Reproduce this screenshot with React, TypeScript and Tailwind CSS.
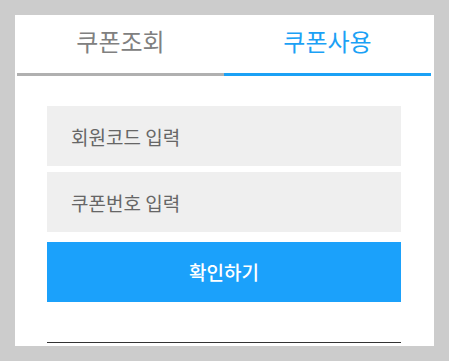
import * as React from "react";

const App = () => {
    const [tab, setTab] = React.useState(1);

    return (
        <div className="w-[449px] h-[361px] bg-[#cccccc] p-[15px]" style={{ fontFamily: '"Noto Sans CJK KR", "Noto Sans", sans-serif' }}>
            <div className="bg-white h-[331px] pl-[2px] pr-[3px]">
                <div className="flex">
                    {["쿠폰조회", "쿠폰사용"].map((label, i) => (
                        <button
                            key={label}
                            onClick={() => setTab(i)}
                            className={`flex-1 h-[61px] pb-[6px] flex items-center justify-center text-[24px] border-b-[3px] ${
                                tab === i ? "text-[#1ba1f5] border-[#1ba1f5]" : "text-[#808080] border-[#b0b0b0]"
                            }`}
                        >
                            {label}
                        </button>
                    ))}
                </div>

                <div className="px-[30px] pt-[30px]">
                    <input
                        className="block w-full h-[60px] bg-[#efefef] pl-[24px] text-[19px] text-[#666] placeholder:text-[#666] outline-none"
                        placeholder="회원코드 입력"
                    />
                    <input
                        className="block w-full h-[60px] mt-[6px] bg-[#efefef] pl-[24px] text-[19px] text-[#666] placeholder:text-[#666] outline-none"
                        placeholder="쿠폰번호 입력"
                    />
                    <button className="block w-full h-[60px] mt-[10px] bg-[#1ba1fb] text-white text-[19px] font-medium">
                        확인하기
                    </button>
                    <div className="mt-[40px] border-t border-[#333]"></div>
                </div>
            </div>
        </div>
    );
};

export default App;
